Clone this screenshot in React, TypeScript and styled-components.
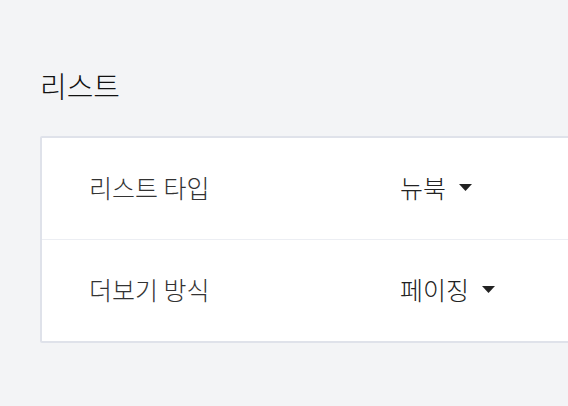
import { ReactElement } from 'react';
import styled, { createGlobalStyle } from 'styled-components';

type Setting = {
  label: string;
  value: string;
};

const settings: Setting[] = [
  { label: '리스트 타입', value: '뉴북' },
  { label: '더보기 방식', value: '페이징' }
];

const GlobalStyle = createGlobalStyle`
  html, body {
    margin: 0;
    padding: 0;
    background: #f3f4f6;
  }
  body {
    font-family: 'Noto Sans CJK KR', 'Noto Sans', sans-serif;
    color: #333;
  }
`;

const Caret = () => (
  <svg width="13" height="7" viewBox="0 0 13 7">
    <path d="M0 0 H13 L6.5 7 Z" fill="#222" />
  </svg>
);

const App = (): ReactElement => {
  return (
    <Page>
      <GlobalStyle />
      <Title>리스트</Title>
      <Card>
        {settings.map((s) => (
          <Row key={s.label}>
            <Label>{s.label}</Label>
            <Select>
              {s.value}
              <Caret />
            </Select>
          </Row>
        ))}
      </Card>
    </Page>
  );
};

const Page = styled.div`
  padding: 63px 0 0 40px;
  min-height: 406px;
  box-sizing: border-box;
  overflow: hidden;
`;

const Title = styled.h2`
  margin: 0 0 29px 0;
  font-size: 29px;
  font-weight: 300;
  line-height: 44px;
  color: #111;
`;

const Card = styled.div`
  width: 560px;
  background: #fff;
  border: 2px solid #dfe2ea;
  border-radius: 2px;
`;

const Row = styled.div`
  display: grid;
  grid-template-columns: 311px 1fr;
  align-items: center;
  height: 101px;
  padding-left: 47px;
  line-height: 30px;
  & + & {
    border-top: 1px solid #eceef3;
  }
`;

const Label = styled.span`
  font-size: 25px;
  font-weight: 300;
  color: #333;
  margin-top: -3px;
`;

const Select = styled.span`
  display: flex;
  align-items: center;
  gap: 13px;
  font-size: 25px;
  font-weight: 300;
  color: #222;
  margin-top: -3px;
`;

export default App;
